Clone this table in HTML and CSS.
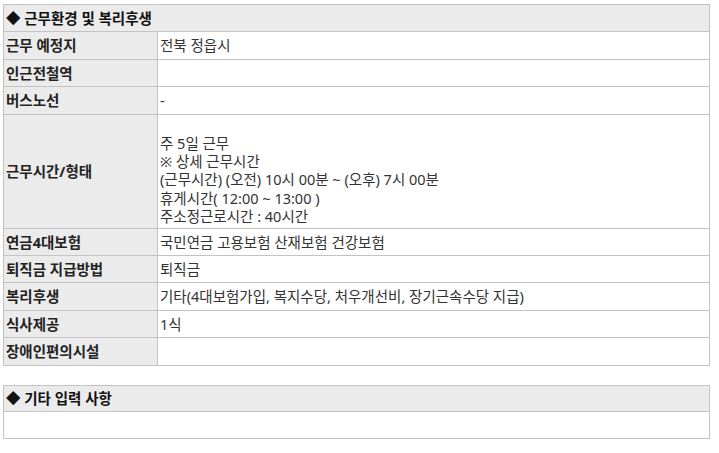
FILE: index.html
```html
<!DOCTYPE html>
<html lang="ko">
<head>
<meta charset="utf-8">
<title>근무환경 및 복리후생</title>
<link rel="stylesheet" href="styles.css">
</head>
<body>
<div class="page">
  <table class="info">
    <colgroup><col class="c-label"><col class="c-val"></colgroup>
    <tr><th colspan="2" class="sec">◆ 근무환경 및 복리후생</th></tr>
    <tr><th class="label">근무 예정지</th><td class="val">전북 정읍시</td></tr>
    <tr><th class="label">인근전철역</th><td class="val"></td></tr>
    <tr><th class="label">버스노선</th><td class="val">-</td></tr>
    <tr><th class="label">근무시간/형태</th><td class="val multi">주 5일 근무<br>※ 상세 근무시간<br>(근무시간) (오전) 10시 00분 ~ (오후) 7시 00분<br>휴게시간( 12:00 ~ 13:00 )<br>주소정근로시간 : 40시간</td></tr>
    <tr><th class="label">연금4대보험</th><td class="val">국민연금 고용보험 산재보험 건강보험</td></tr>
    <tr><th class="label">퇴직금 지급방법</th><td class="val">퇴직금</td></tr>
    <tr><th class="label">복리후생</th><td class="val">기타(4대보험가입, 복지수당, 처우개선비, 장기근속수당 지급)</td></tr>
    <tr><th class="label">식사제공</th><td class="val">1식</td></tr>
    <tr><th class="label">장애인편의시설</th><td class="val"></td></tr>
  </table>

  <table class="info extra">
    <tr><th class="sec">◆ 기타 입력 사항</th></tr>
    <tr><td class="val empty"></td></tr>
  </table>
</div>
</body>
</html>
```

FILE: styles.css
```css
html, body {
  margin: 0;
  padding: 0;
  background: #ffffff;
}

.page {
  padding: 4px 0 0 3px;
  font-family: "Noto Sans", "Noto Sans CJK KR", sans-serif;
  font-size: 14.5px;
  color: #333333;
}

.info {
  width: 707px;
  border-collapse: collapse;
  table-layout: fixed;
}

.c-label {
  width: 154px;
}

.info th,
.info td {
  border: 1px solid #c3c3c3;
  padding: 4px 2px;
  line-height: 18.4px;
  text-align: left;
  vertical-align: middle;
}

.sec {
  background: #ebebeb;
  font-weight: bold;
  color: #111111;
}

.label {
  background: #ebebeb;
  font-weight: bold;
  color: #222222;
}

.val {
  padding-left: 3px;
  background: #ffffff;
}

.info td.multi {
  padding-top: 19px;
  padding-bottom: 2px;
}

.extra {
  margin-top: 19px;
}

.extra .sec {
  padding-top: 3.5px;
  padding-bottom: 3.5px;
}

.info td.empty {
  height: 18.4px;
  padding-top: 4px;
  padding-bottom: 4px;
}
```
